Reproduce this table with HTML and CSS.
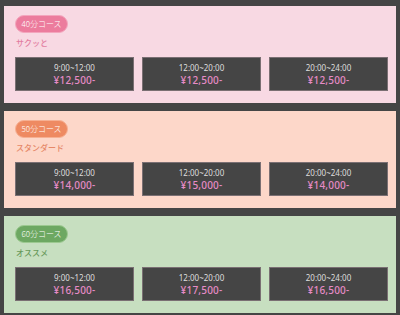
FILE: index.html
```html
<!DOCTYPE html>
<html lang="ja">
<head>
<meta charset="utf-8">
<link rel="stylesheet" href="styles.css">
</head>
<body>
<div class="page">
  <section class="course pink">
    <span class="badge">40分コース</span>
    <p class="sub">サクッと</p>
    <div class="slots">
      <div class="slot"><span class="time">9:00~12:00</span><span class="price">¥12,500-</span></div>
      <div class="slot"><span class="time">12:00~20:00</span><span class="price">¥12,500-</span></div>
      <div class="slot"><span class="time">20:00~24:00</span><span class="price">¥12,500-</span></div>
    </div>
  </section>
  <section class="course orange">
    <span class="badge">50分コース</span>
    <p class="sub">スタンダード</p>
    <div class="slots">
      <div class="slot"><span class="time">9:00~12:00</span><span class="price">¥14,000-</span></div>
      <div class="slot"><span class="time">12:00~20:00</span><span class="price">¥15,000-</span></div>
      <div class="slot"><span class="time">20:00~24:00</span><span class="price">¥14,000-</span></div>
    </div>
  </section>
  <section class="course green">
    <span class="badge">60分コース</span>
    <p class="sub">オススメ</p>
    <div class="slots">
      <div class="slot"><span class="time">9:00~12:00</span><span class="price">¥16,500-</span></div>
      <div class="slot"><span class="time">12:00~20:00</span><span class="price">¥17,500-</span></div>
      <div class="slot"><span class="time">20:00~24:00</span><span class="price">¥16,500-</span></div>
    </div>
  </section>
</div>
</body>
</html>
```
FILE: styles.css
```css
html, body {
  margin: 0;
  padding: 0;
  background: #454545;
}
body {
  font-family: "Noto Sans", "Noto Sans CJK JP", sans-serif;
  width: 400px;
  height: 315px;
  overflow: hidden;
}
.page {
  display: flex;
  flex-direction: column;
  gap: 8px;
  padding: 6px 4px 0 4px;
}
.course {
  height: 97px;
  box-sizing: border-box;
  padding: 9px 8px 0 11px;
  display: flex;
  flex-direction: column;
  align-items: flex-start;
}
.pink { background: #f8d9e3; }
.orange { background: #fdd7c9; }
.green { background: #c7dfc0; }
.badge {
  box-sizing: border-box;
  height: 18px;
  width: 53px;
  border-radius: 9px;
  color: #fff;
  font-family: "Noto Sans CJK JP", sans-serif;
  font-size: 8px;
  font-weight: 300;
  line-height: 16px;
  text-align: center;
  border: 1px solid;
}
.pink .badge { background: #ec7c9d; border-color: #f3a6bd; }
.orange .badge { background: #ee8a62; border-color: #f6b093; }
.green .badge { background: #6da862; border-color: #9cc990; }
.sub {
  margin: 3px 0 0 1px;
  font-family: "Noto Sans CJK JP", sans-serif;
  font-size: 8px;
  font-weight: 500;
  line-height: 14px;
  height: 14px;
}
.pink .sub { color: #e27ca0; }
.orange .sub { color: #e68868; }
.green .sub { color: #68995b; }
.slots {
  margin-top: 7px;
  align-self: stretch;
  display: grid;
  grid-template-columns: repeat(3, 1fr);
  gap: 8px;
}
.slot {
  box-sizing: border-box;
  height: 34px;
  background: #454545;
  border: 1px solid #7a6f73;
  display: flex;
  flex-direction: column;
  align-items: center;
  padding-top: 4px;
}
.time {
  color: #dedede;
  font-size: 8px;
  line-height: 12px;
}
.price {
  color: #e68bc6;
  font-size: 10px;
  line-height: 13px;
  font-weight: 500;
  letter-spacing: 0.2px;
}
```
